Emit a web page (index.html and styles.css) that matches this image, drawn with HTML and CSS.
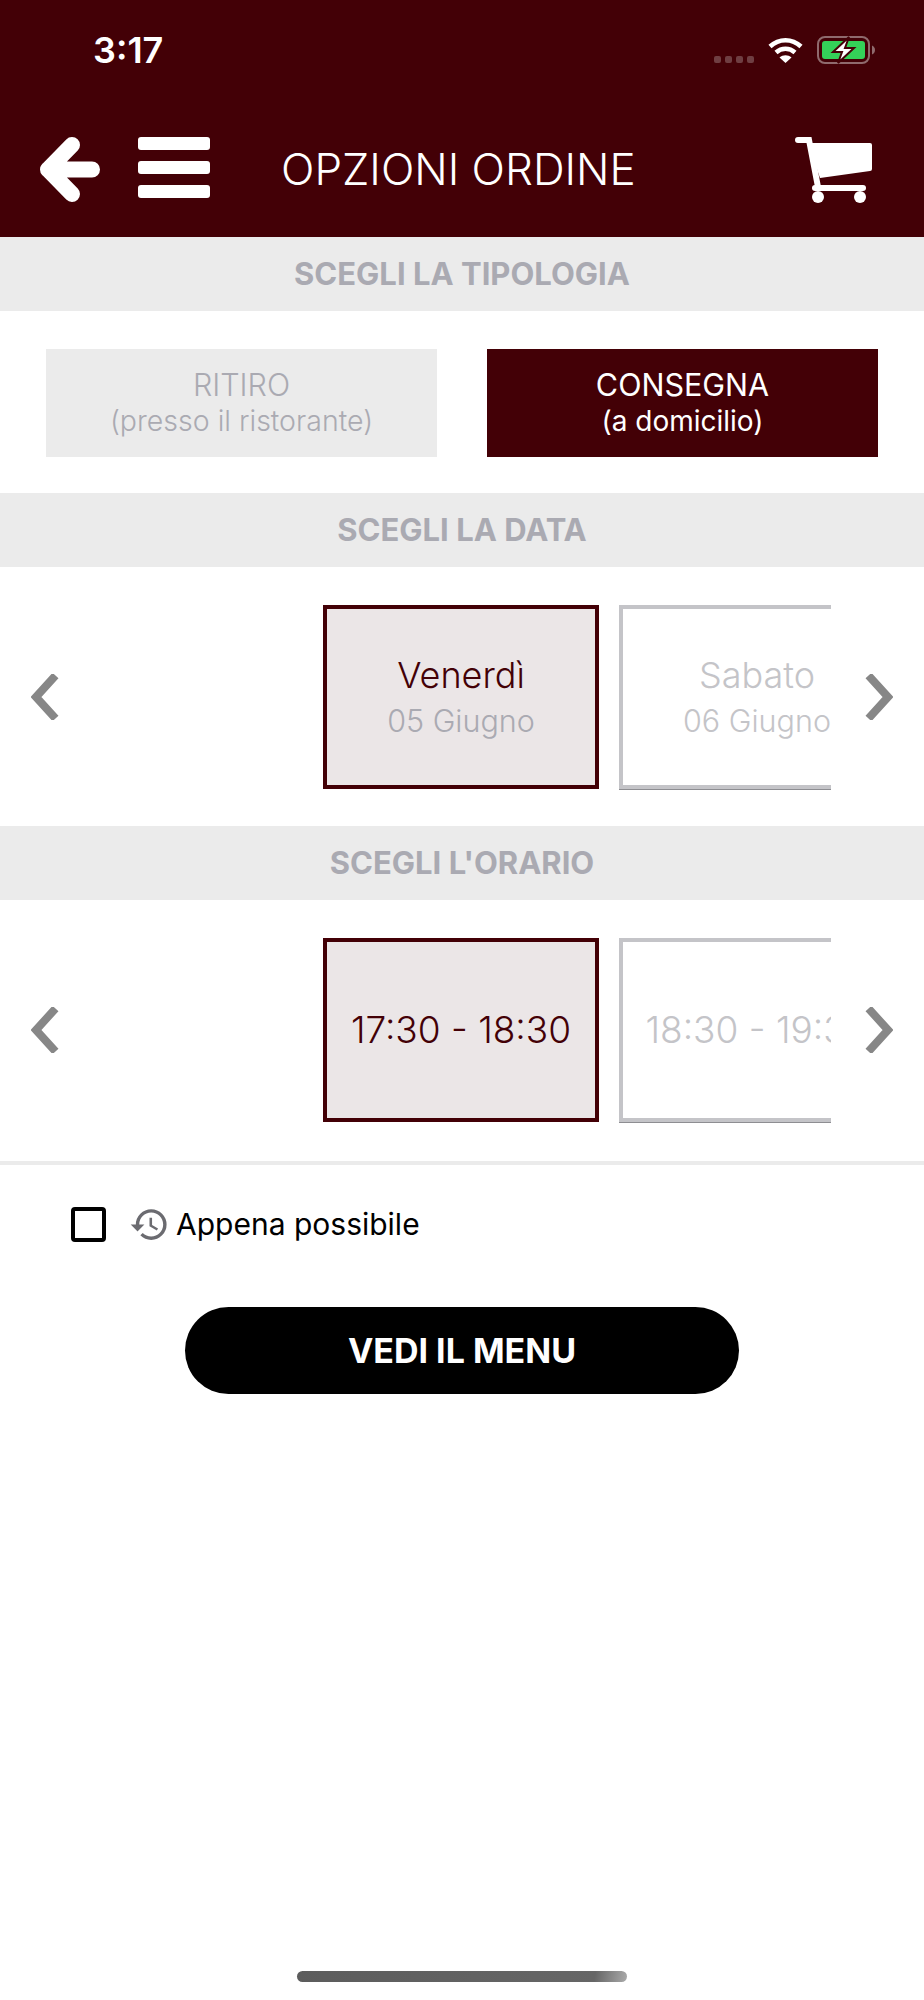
FILE: index.html

```html
<!DOCTYPE html>
<html lang="it">
<head>
<meta charset="UTF-8" />
<meta name="viewport" content="width=device-width, initial-scale=1" />
<title>Opzioni ordine</title>
<link rel="stylesheet" href="styles.css">
</head>
<body>

<header class="top">
  <div class="status">
    <span class="clock">3:17</span>
    <div class="status-icons">
      <div class="signal"><i></i><i></i><i></i><i></i></div>
      <svg class="wifi" width="35" height="26" viewBox="0 0 35 26">
        <path d="M2 9.500C11 1 24 1 33 9.500" fill="none" stroke="#fff" stroke-width="4.500"/>
        <path d="M8 15.500C13.500 10.500 21.500 10.500 27 15.500" fill="none" stroke="#fff" stroke-width="4.500"/>
        <path d="M11.500 20.500C15 17.500 20 17.500 23.500 20.500L17.500 26Z" fill="#fff"/>
      </svg>
      <svg class="battery" width="58" height="28" viewBox="0 0 58 28">
        <rect x="1" y="1" width="51" height="26" rx="7" fill="none" stroke="#8f6a6d" stroke-width="2"/>
        <rect x="5" y="5" width="43" height="18" rx="3" fill="#34d158"/>
        <path d="M55 9.500C57 10.500 58 12 58 14C58 16 57 17.500 55 18.500Z" fill="#8f6a6d"/>
        <path d="M32 1L16 16H25L21 27L37 12H28Z" fill="#fff" stroke="#430006" stroke-width="2"/>
      </svg>
    </div>
  </div>
  <nav class="navbar">
    <svg class="back" width="60" height="66" viewBox="0 0 60 66">
      <path d="M32 8L8 32.500L32 57M8 32.500H52" fill="none" stroke="#fff" stroke-width="16" stroke-linecap="round" stroke-linejoin="round"/>
    </svg>
    <div class="burger"><i></i><i></i><i></i></div>
    <h1 class="title">OPZIONI ORDINE</h1>
    <svg class="cart" width="77" height="66" viewBox="0 0 77 66">
      <path d="M3 3H14L23 50" fill="none" stroke="#fff" stroke-width="6" stroke-linecap="round"/>
      <path d="M13 6H75Q77 6 77 8V32Q77 34 75 34L25 41Z" fill="#fff"/>
      <rect x="17" y="48" width="54" height="6" rx="3" fill="#fff"/>
      <circle cx="23" cy="60" r="6" fill="#fff"/>
      <circle cx="65" cy="60" r="6" fill="#fff"/>
    </svg>
  </nav>
</header>

<div class="band">SCEGLI LA TIPOLOGIA</div>
<div class="types">
  <div class="type"><span class="type-main">RITIRO</span><span class="type-sub">(presso il ristorante)</span></div>
  <div class="type type-on"><span class="type-main">CONSEGNA</span><span class="type-sub">(a domicilio)</span></div>
</div>

<div class="band">SCEGLI LA DATA</div>
<div class="picker">
  <svg class="arrow" width="28" height="46" viewBox="0 0 28 46"><path d="M24.500 1.500L5 23L24.500 44.500" fill="none" stroke="#878787" stroke-width="8"/></svg>
  <div class="track">
    <div class="slot slot-on">
      <span class="day">Venerdì</span>
      <span class="date">05 Giugno</span>
    </div>
    <div class="slot">
      <span class="day">Sabato</span>
      <span class="date">06 Giugno</span>
    </div>
  </div>
  <svg class="arrow" width="28" height="46" viewBox="0 0 28 46"><path d="M3.500 1.500L23 23L3.500 44.500" fill="none" stroke="#878787" stroke-width="8"/></svg>
</div>

<div class="band">SCEGLI L'ORARIO</div>
<div class="picker picker-last">
  <svg class="arrow" width="28" height="46" viewBox="0 0 28 46"><path d="M24.500 1.500L5 23L24.500 44.500" fill="none" stroke="#878787" stroke-width="8"/></svg>
  <div class="track">
    <div class="slot slot-on"><span class="time">17:30 - 18:30</span></div>
    <div class="slot"><span class="time">18:30 - 19:30</span></div>
  </div>
  <svg class="arrow" width="28" height="46" viewBox="0 0 28 46"><path d="M3.500 1.500L23 23L3.500 44.500" fill="none" stroke="#878787" stroke-width="8"/></svg>
</div>

<label class="asap">
  <span class="check"></span>
  <svg class="history" width="41" height="41" viewBox="0 0 24 24"><path fill="#6b6b70" d="M13 3a9 9 0 0 0-9 9H1l3.890 3.890.07.140L9 12H6c0-3.870 3.130-7 7-7s7 3.130 7 7-3.130 7-7 7c-1.930 0-3.680-.790-4.940-2.060l-1.420 1.420A8.954 8.954 0 0 0 13 21a9 9 0 0 0 0-18zm-1 5v5l4.280 2.540.720-1.210-3.500-2.080V8H12z"/></svg>
  <span class="asap-text">Appena possibile</span>
</label>

<button class="menu-btn">VEDI IL MENU</button>

<div class="home-bar"></div>

</body>
</html>
```

FILE: styles.css

```css
* { box-sizing: border-box; }
html, body {
  margin: 0; padding: 0;
  height: 2000px;
  background: #fff;
  font-family: Inter, "Liberation Sans", sans-serif;
  overflow: hidden;
}
body {
  display: flex;
  flex-direction: column;
}

.top {
  height: 237px;
  background: #430006;
  color: #fff;
  flex: none;
}

.status {
  height: 100px;
  padding: 36px 49px 0 93px;
  display: flex;
  justify-content: space-between;
  align-items: flex-start;
}
.clock {
  font-size: 36px;
  line-height: 28px;
  font-weight: 600;
}
.status-icons {
  display: flex;
  align-items: flex-start;
}
.signal {
  display: flex;
  gap: 4px;
  margin-top: 20px;
  margin-right: 14px;
}
.signal i {
  width: 7px;
  height: 7px;
  border-radius: 2px;
  background: #6f3e42;
}
.wifi { margin-top: 1px; margin-right: 14px; }

.navbar {
  height: 66px;
  margin-top: 37px;
  padding: 0 52px 0 40px;
  display: flex;
  align-items: flex-start;
}
.back { flex: none; }
.burger {
  width: 72px;
  margin-left: 38px;
  display: flex;
  flex-direction: column;
  gap: 11px;
}
.burger i {
  height: 13px;
  border-radius: 3px;
  background: #fff;
}
.title {
  margin: 0 0 0 71px;
  font-size: 44px;
  line-height: 64px;
  font-weight: 300;
  white-space: nowrap;
}
.cart { margin-left: auto; flex: none; }

.band {
  height: 74px;
  flex: none;
  background: #ebebeb;
  color: #aaaab2;
  font-size: 31px;
  font-weight: 700;
  line-height: 74px;
  text-align: center;
}

.types {
  height: 182px;
  flex: none;
  padding: 38px 46px 36px;
  display: flex;
  justify-content: space-between;
}
.type {
  width: 391px;
  height: 108px;
  background: #ebebeb;
  color: #aaaab2;
  font-weight: 300;
  text-align: center;
  padding-top: 18px;
  display: flex;
  flex-direction: column;
}
.type-main {
  font-size: 30.500px;
  line-height: 36px;
}
.type-sub {
  font-size: 28.500px;
  line-height: 36px;
}
.type-on {
  background: #430006;
  color: #fff;
  font-weight: 400;
}
.type-on .type-sub { font-size: 28px; }

.picker {
  height: 259px;
  flex: none;
  padding: 38px 31px 37px;
  display: flex;
  align-items: center;
}
.picker-last {
  height: 261px;
  padding-bottom: 39px;
}
.arrow { flex: none; }
.track {
  width: 772px;
  height: 185px;
  padding-left: 264px;
  margin-right: 34px;
  display: flex;
  gap: 20px;
  overflow: hidden;
  flex: none;
}

.slot {
  width: 276px;
  height: 184px;
  flex: none;
  border: 4px solid #c4c4c8;
  box-shadow: 0 1px 0 #8e8e92;
  color: #c4c4c8;
  display: flex;
  flex-direction: column;
  align-items: center;
  justify-content: center;
  white-space: nowrap;
  overflow: hidden;
}
.slot-on {
  border: 4px solid #430006;
  box-shadow: none;
  background: #ebe6e7;
}
.slot-on .day, .slot-on .time { color: #430006; }
.slot-on .date { color: #aaaab2; }
.day {
  font-size: 36px;
  line-height: 44px;
  font-weight: 300;
}
.date {
  margin-top: 4px;
  font-size: 30.500px;
  line-height: 40px;
  font-weight: 300;
}
.time {
  font-size: 37px;
  line-height: 44px;
  font-weight: 300;
}

.asap {
  flex: none;
  border-top: 4px solid #ebebeb;
  padding: 42px 0 0 71px;
  height: 146px;
  display: flex;
  align-items: flex-start;
}
.check {
  width: 35px;
  height: 35px;
  flex: none;
  border: 4px solid #000;
  border-radius: 4px;
}
.history { margin: -3px 0 0 23px; flex: none; }
.asap-text {
  margin-left: 6px;
  font-size: 30px;
  line-height: 34px;
  color: #000;
}

.menu-btn {
  width: 554px;
  height: 87px;
  flex: none;
  margin-left: 185px;
  background: #000;
  color: #fff;
  border: 0;
  border-radius: 44px;
  font-family: inherit;
  font-size: 34px;
  line-height: 84px;
  font-weight: 700;
  padding: 0;
}

.home-bar {
  width: 330px;
  height: 11px;
  flex: none;
  margin: auto 0 18px 297px;
  border-radius: 6px;
  background: linear-gradient(100deg, #5c5c5c 0%, #666 90%, #aaa 100%);
}
```
